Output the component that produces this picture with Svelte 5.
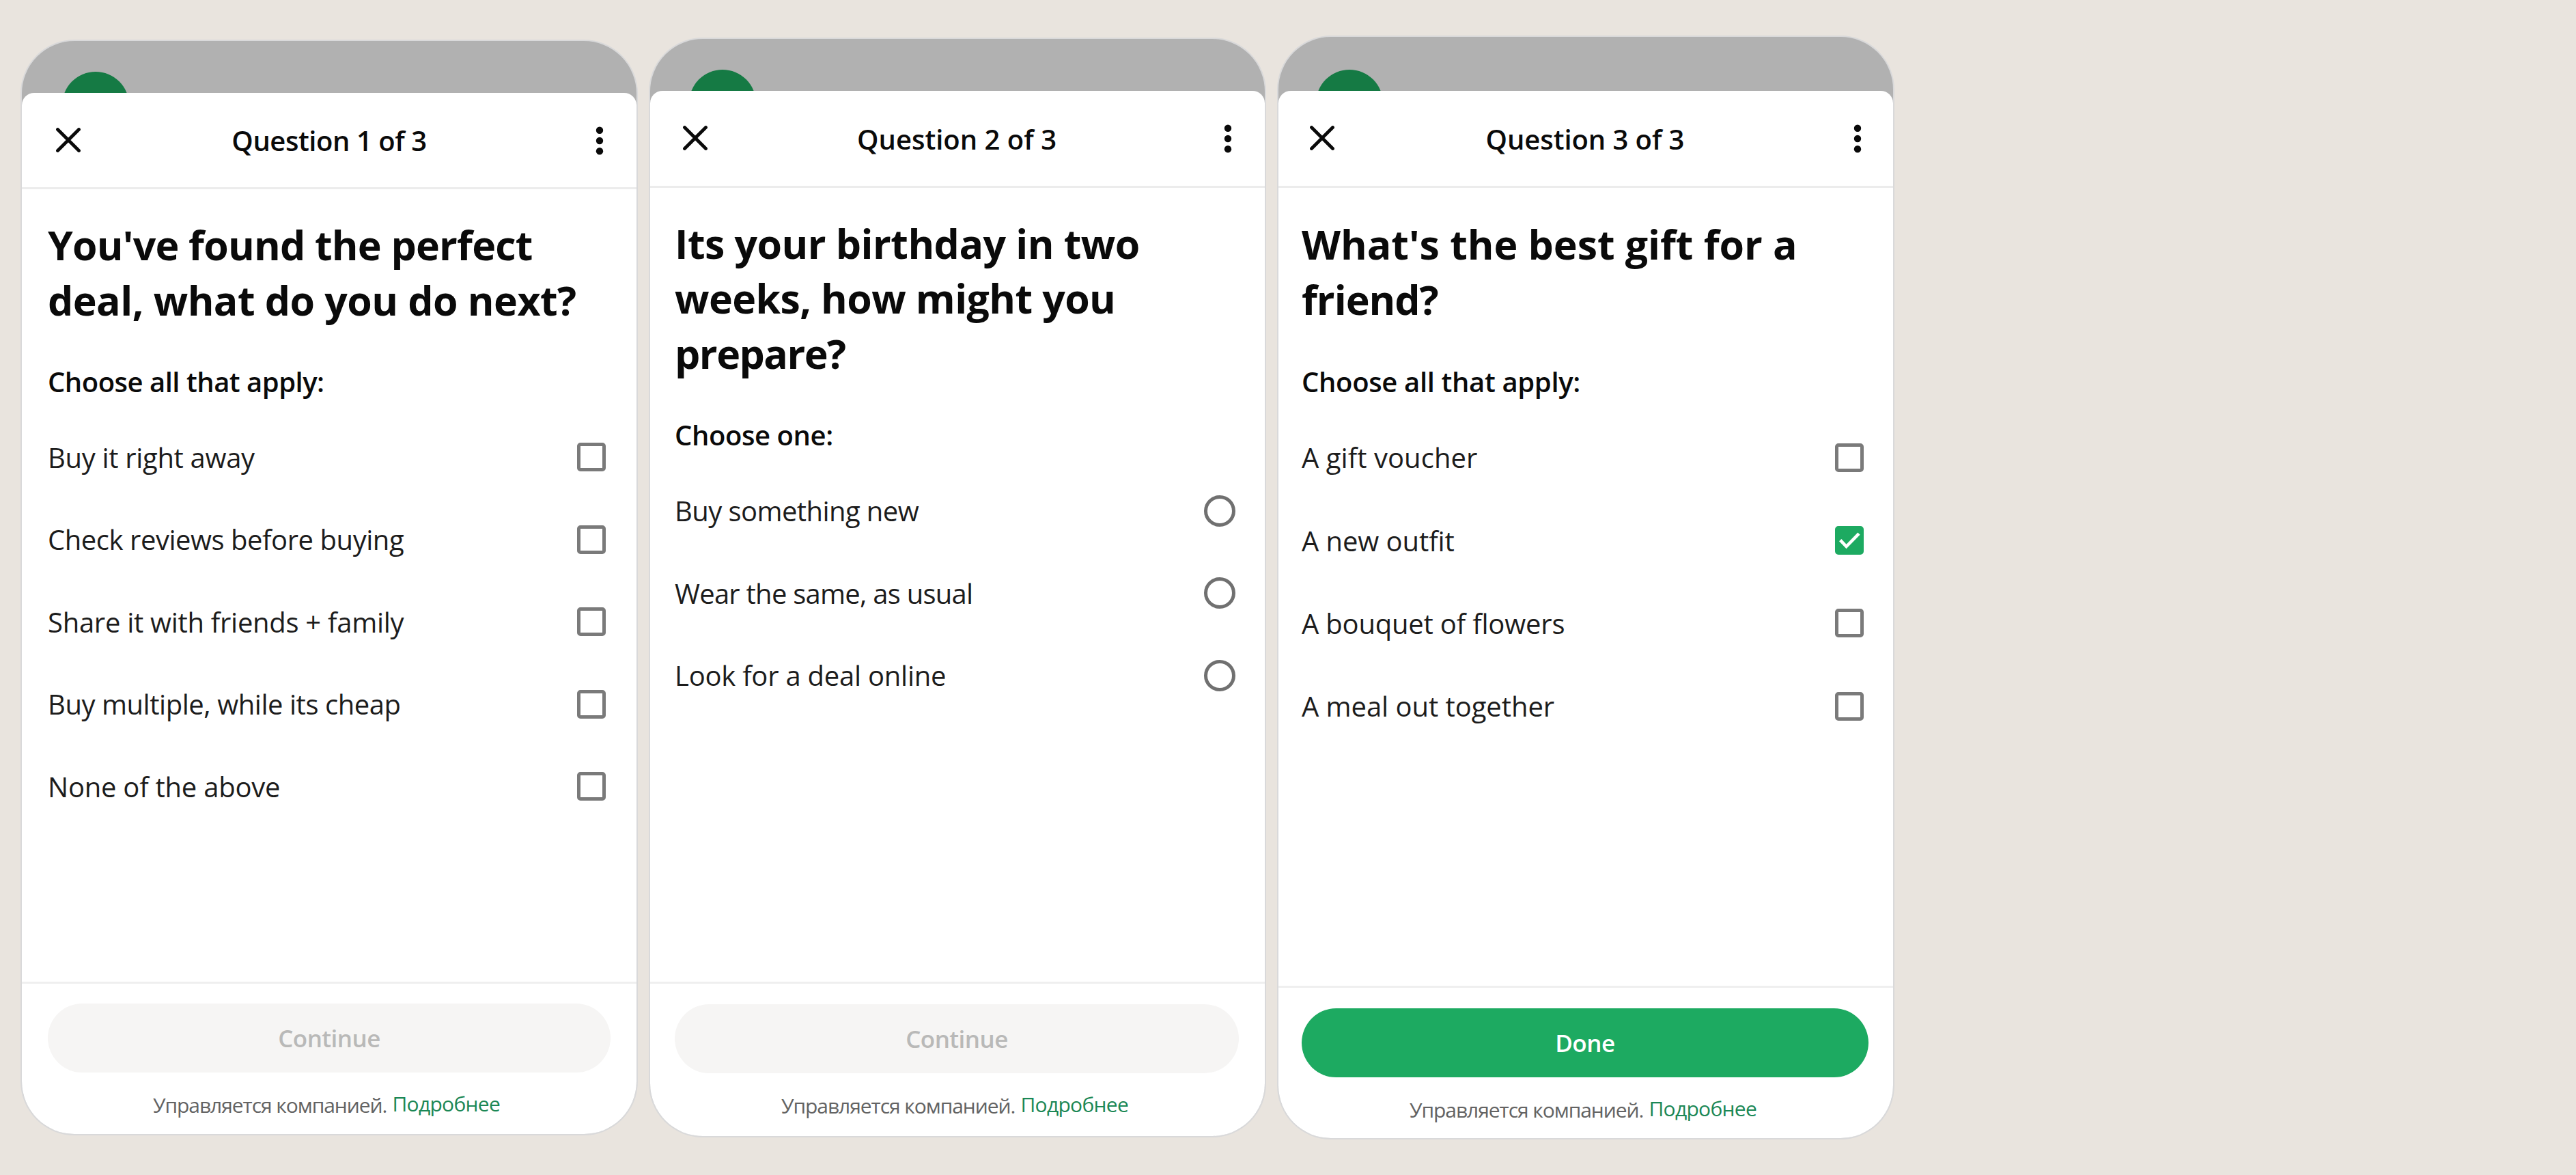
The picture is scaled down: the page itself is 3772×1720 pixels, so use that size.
<script lang="ts">
  type Line = { text: string; tracking: number; checked?: boolean };

  type Screen = {
    id: string;
    title: Line;
    heading: Line[];
    hint: Line;
    control: 'checkbox' | 'radio';
    options: Line[];
    action: Line;
    ready: boolean;
  };

  // tracking is the letter-spacing of each line, in px
  const screens: Screen[] = [
    {
      id: 'first',
      title: { text: 'Question 1 of 3', tracking: -0.45 },
      heading: [
        { text: "You've found the perfect", tracking: -0.78 },
        { text: 'deal, what do you do next?', tracking: -0.55 },
      ],
      hint: { text: 'Choose all that apply:', tracking: -0.5 },
      control: 'checkbox',
      options: [
        { text: 'Buy it right away', tracking: -0.33 },
        { text: 'Check reviews before buying', tracking: -0.46 },
        { text: 'Share it with friends + family', tracking: -0.29 },
        { text: 'Buy multiple, while its cheap', tracking: -0.46 },
        { text: 'None of the above', tracking: -0.24 },
      ],
      action: { text: 'Continue', tracking: -0.55 },
      ready: false,
    },
    {
      id: 'second',
      title: { text: 'Question 2 of 3', tracking: 0 },
      heading: [
        { text: 'Its your birthday in two', tracking: -0.55 },
        { text: 'weeks, how might you', tracking: -0.6 },
        { text: 'prepare?', tracking: -1.5 },
      ],
      hint: { text: 'Choose one:', tracking: -0.42 },
      control: 'radio',
      options: [
        { text: 'Buy something new', tracking: -0.58 },
        { text: 'Wear the same, as usual', tracking: -0.75 },
        { text: 'Look for a deal online', tracking: -0.25 },
      ],
      action: { text: 'Continue', tracking: -0.55 },
      ready: false,
    },
    {
      id: 'third',
      title: { text: 'Question 3 of 3', tracking: -0.08 },
      heading: [
        { text: "What's the best gift for a", tracking: -0.04 },
        { text: 'friend?', tracking: -1 },
      ],
      hint: { text: 'Choose all that apply:', tracking: -0.35 },
      control: 'checkbox',
      options: [
        { text: 'A gift voucher', tracking: 0.05 },
        { text: 'A new outfit', tracking: -0.08 },
        { text: 'A bouquet of flowers', tracking: -0.2 },
        { text: 'A meal out together', tracking: -0.06 },
      ],
      action: { text: 'Done', tracking: -0.42 },
      ready: true,
    },
  ];
  screens[2].options[1].checked = true;

  let answers = $state(screens.map((s) => s.options.map((o) => !!o.checked)));

  // Radios keep a single answer, checkboxes toggle on their own
  function pick(s: number, o: number) {
    if (screens[s].control === 'radio') {
      answers[s] = answers[s].map((_, i) => i === o);
    } else {
      answers[s][o] = !answers[s][o];
    }
  }
</script>

<main class="board">
  {#each screens as screen, s}
    <section class="phone {screen.id}">
      <div class="backdrop">
        <span class="avatar"></span>
      </div>

      <div class="sheet">
        <header class="bar">
          <button class="icon" aria-label="Close">
            <svg class="close" viewBox="0 0 36 36">
              <path d="M2.5 2.5 33.5 33.5M33.5 2.5 2.5 33.5" />
            </svg>
          </button>
          <span class="title" style="letter-spacing: {screen.title.tracking}px">{screen.title.text}</span>
          <button class="icon end" aria-label="More">
            <svg class="more" viewBox="0 0 12 42">
              <circle cx="6" cy="5.7" r="5.2" />
              <circle cx="6" cy="21" r="5.2" />
              <circle cx="6" cy="36.3" r="5.2" />
            </svg>
          </button>
        </header>

        <div class="body">
          <h1>
            {#each screen.heading as line}
              <span style="letter-spacing: {line.tracking}px">{line.text}</span>
            {/each}
          </h1>
          <p class="hint" style="letter-spacing: {screen.hint.tracking}px">{screen.hint.text}</p>

          <ul>
            {#each screen.options as option, o}
              <li>
                <button class="option" onclick={() => pick(s, o)}>
                  <span class="label" style="letter-spacing: {option.tracking}px">{option.text}</span>
                  <span class={screen.control} class:checked={answers[s][o]}>
                    {#if screen.control === 'checkbox' && answers[s][o]}
                      <svg viewBox="0 0 42 42">
                        <path d="M7.7 20.6 16.6 30 35 11.2" />
                      </svg>
                    {/if}
                  </span>
                </button>
              </li>
            {/each}
          </ul>
        </div>

        <footer>
          <button class="action" class:ready={screen.ready} style="letter-spacing: {screen.action.tracking}px">
            {screen.action.text}
          </button>
          <p class="legal">
            <span class="managed">Управляется компанией.</span>
            <a href="#more">Подробнее</a>
          </p>
        </footer>
      </div>
    </section>
  {/each}
</main>

<style>
  :global(body) {
    background: #e9e4de;
  }

  .board {
    display: flex;
    align-items: flex-start;
    gap: 16px;
    box-sizing: border-box;
    height: 1720px;
    padding-left: 30px;
    overflow: hidden;
    font-family: 'Open Sans', 'Noto Sans', sans-serif;
    color: #0a0a0a;
  }

  button {
    margin: 0;
    padding: 0;
    border: 0;
    background: none;
    color: inherit;
    font: inherit;
    cursor: pointer;
  }

  .phone {
    display: flex;
    flex-direction: column;
    box-sizing: border-box;
    width: 904px;
    height: var(--height);
    margin-top: var(--top);
    border: 2px solid #d9d9da;
    border-radius: 79px;
    background: #b1b1b1;
    overflow: hidden;
  }

  .first {
    --top: 58px;
    --height: 1604px;
    --peek: 76px;
    --bar: 138px;
    --left: 38px;
    --right: 38px;
    --control: 45px;
    --heading-gap: 41px;
    --hint-gap: 49.5px;
    --row: 120.5px;
    --footer: 220.5px;
    --button: 100.5px;
  }

  .second {
    --top: 55px;
    --height: 1610px;
    --peek: 76px;
    --bar: 139px;
    --left: 36px;
    --right: 38px;
    --control: 43px;
    --heading-gap: 40.5px;
    --hint-gap: 50px;
    --row: 120.6px;
    --footer: 223px;
    --button: 101px;
  }

  .third {
    --top: 52px;
    --height: 1616px;
    --peek: 79px;
    --bar: 139px;
    --left: 34px;
    --right: 36px;
    --control: 43px;
    --heading-gap: 42px;
    --hint-gap: 50.5px;
    --row: 121.4px;
    --footer: 220px;
    --button: 101.5px;
  }

  .backdrop {
    flex: none;
    height: var(--peek);
    padding-left: calc(var(--left) + 21px);
    overflow: hidden;
  }

  .avatar {
    display: block;
    width: 98px;
    height: 98px;
    margin-top: calc(var(--peek) - 31px);
    border-radius: 50%;
    background: #157a44;
  }

  .sheet {
    flex: 1;
    display: flex;
    flex-direction: column;
    border-radius: 18px 18px 0 0;
    background: #fff;
  }

  .bar {
    display: grid;
    grid-template-columns: 1fr auto 1fr;
    align-items: center;
    height: var(--bar);
    padding: 0 48px 0 calc(var(--left) + 12px);
    border-bottom: 3px solid #ececec;
  }

  .third .bar {
    padding-right: 46px;
  }

  .icon {
    display: flex;
  }

  .icon.end {
    justify-content: flex-end;
  }

  .close {
    width: 36px;
    height: 36px;
    margin-top: -1px;
    fill: none;
    stroke: #0a0a0a;
    stroke-width: 4.8;
    stroke-linecap: round;
  }

  .more {
    width: 12px;
    height: 42px;
    margin-top: 1px;
    fill: #0a0a0a;
  }

  .title {
    margin-right: 2px;
    padding-top: 2px;
    font-size: 40px;
    line-height: 60px;
    font-weight: 560;
  }

  .third .title {
    font-weight: 600;
  }

  .body {
    flex: 1;
    padding: var(--heading-gap) var(--right) 0 var(--left);
  }

  h1 {
    margin: 0;
    font-size: 59px;
    line-height: 80.5px;
    font-weight: 700;

    & span {
      display: block;
      white-space: nowrap;
    }
  }

  .hint {
    margin: var(--hint-gap) 0 20.5px;
    font-size: 40px;
    line-height: 60px;
    font-weight: 600;
  }

  ul {
    margin: 0;
    padding: 0;
    list-style: none;
  }

  .option {
    display: flex;
    align-items: center;
    justify-content: space-between;
    width: 100%;
    height: var(--row);
    padding-right: calc(var(--control) - var(--right));
    color: #1c1c1c;
    font-size: 40px;
    line-height: 60px;
    white-space: nowrap;
  }

  .label {
    padding-top: 1px;
  }

  .checkbox,
  .radio {
    box-sizing: border-box;
    width: 42px;
    height: 42px;
    border: 5px solid #7a7a7a;
    border-radius: 5px;
  }

  .radio {
    width: 46px;
    height: 46px;
    border: 5px solid #707070;
    border-radius: 50%;
  }

  .radio.checked {
    border: 13px solid #1daa61;
  }

  .checkbox.checked {
    border: 0;
    background: #1daa61;

    & svg {
      display: block;
      fill: none;
      stroke: #fff;
      stroke-width: 4.6;
    }
  }

  footer {
    height: var(--footer);
    border-top: 3px solid #efefef;
  }

  .action {
    display: block;
    width: calc(100% - var(--left) - var(--right));
    height: var(--button);
    margin: 29.5px var(--right) 0 var(--left);
    border-radius: 51px;
    background: #f6f5f4;
    color: #b9b9b8;
    font-size: 35px;
    font-weight: 600;
  }

  .action.ready {
    background: #1daa61;
    color: #fff;
  }

  .legal {
    display: flex;
    justify-content: center;
    gap: 8px;
    margin: 28px 0 0;
    padding-right: 8px;
    font-size: 30px;
    line-height: 40px;
    white-space: nowrap;
  }

  .managed {
    color: #636363;
    letter-spacing: -1.05px;
  }

  .legal a {
    margin-top: -2px;
    color: #1b8755;
    letter-spacing: -0.72px;
    text-decoration: none;
  }
</style>
